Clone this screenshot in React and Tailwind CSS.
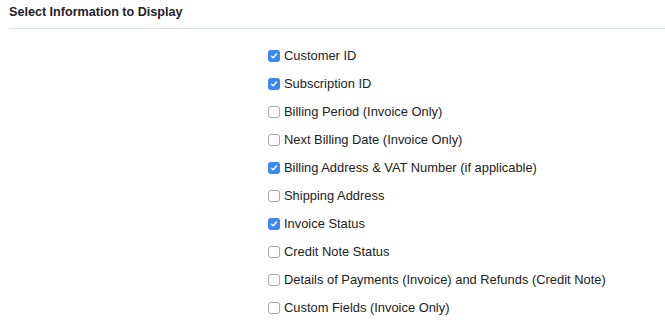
import React from "react";

const items = [
  ["Customer ID", true],
  ["Subscription ID", true],
  ["Billing Period (Invoice Only)", false],
  ["Next Billing Date (Invoice Only)", false],
  ["Billing Address & VAT Number (if applicable)", true],
  ["Shipping Address", false],
  ["Invoice Status", true],
  ["Credit Note Status", false],
  ["Details of Payments (Invoice) and Refunds (Credit Note)", false],
  ["Custom Fields (Invoice Only)", false],
];

function Box({ checked }) {
  if (checked) {
    return (
      <span className="flex h-[12px] w-[12px] shrink-0 items-center justify-center rounded-[3px] bg-[#3b87f5]">
        <svg width="8" height="8" viewBox="0 0 8 8" fill="none">
          <path d="M1.5 4.2 L3.2 5.8 L6.5 2" stroke="white" strokeWidth="1.5" strokeLinecap="round" strokeLinejoin="round" />
        </svg>
      </span>
    );
  }
  return <span className="h-[12px] w-[12px] shrink-0 rounded-[3px] border border-[#a9a9a9] bg-white" />;
}

export default function App() {
  return (
    <div className="h-[336px] w-[665px] bg-white font-['Liberation_Sans',Arial,sans-serif] text-[#222]">
      <div className="pl-[9px] pt-[4px]">
        <div className="text-[12.6px] font-bold leading-[16px] text-[#1f2228]">Select Information to Display</div>
        <div className="mt-[8px] h-px bg-[#dde1ea]" />
      </div>
      <div className="flex flex-col pl-[268px] pt-[13px]">
        {items.map(([label, checked]) => (
          <label key={label} className="flex h-[28px] items-center gap-[4px] text-[12.9px] leading-[16px]">
            <Box checked={checked} />
            <span>{label}</span>
          </label>
        ))}
      </div>
    </div>
  );
}
